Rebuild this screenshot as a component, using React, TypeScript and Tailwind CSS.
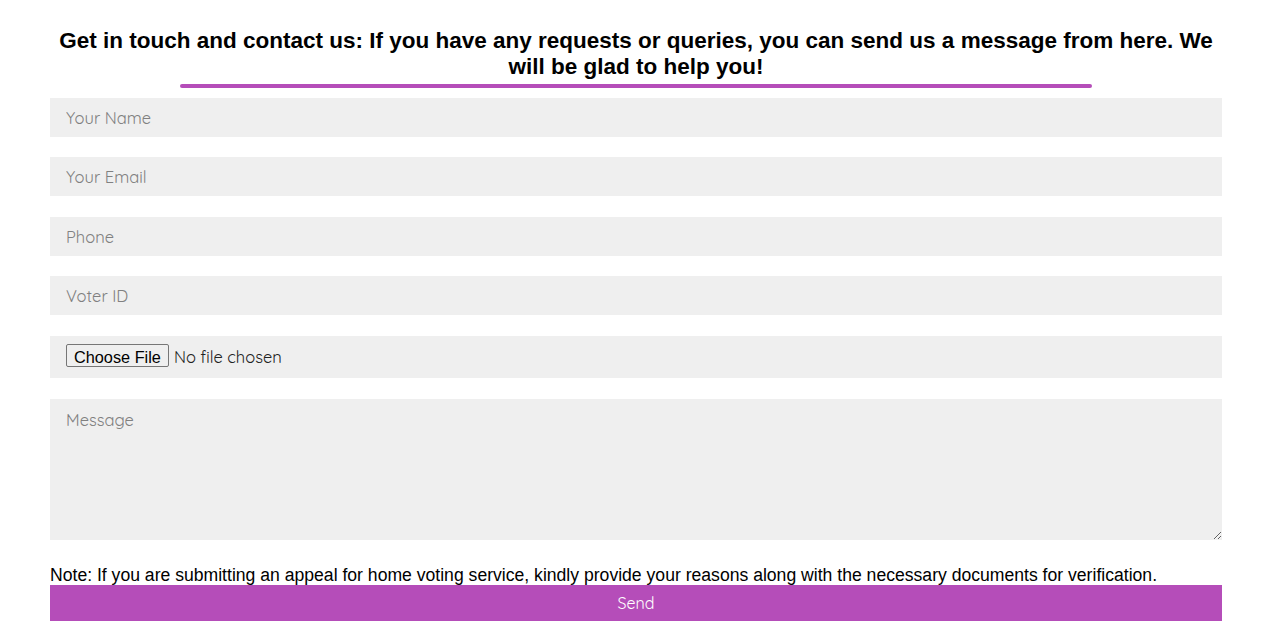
import React from 'react';

const fieldFont = "font-['Quicksand','Lato','Noto_Sans',sans-serif]";

export default function App() {
  const inputClass = `block h-[39px] w-full bg-[#efefef] px-4 text-[16.5px] text-[#333] placeholder:text-[#808080] outline-none ${fieldFont}`;

  return (
    <div className="min-h-[638px] bg-white">
      <div className="ml-[50px] w-[1172px] pt-[28px]">
        <h2 className="text-center font-['Liberation_Sans',Arial,sans-serif] text-[22.5px] font-bold leading-[26px] text-black">
          Get in touch and contact us: If you have any requests or queries, you can send us a message from here. We will be glad to help you!
        </h2>
        <div className="mx-auto mt-[4px] h-[4px] w-[912px] rounded-full bg-[#b54db9]" />

        <form className="mt-[10px] flex flex-col" onSubmit={(e) => e.preventDefault()}>
          <input type="text" placeholder="Your Name" className={inputClass} />
          <input type="email" placeholder="Your Email" className={`${inputClass} mt-[20px]`} />
          <input type="tel" placeholder="Phone" className={`${inputClass} mt-[21px]`} />
          <input type="text" placeholder="Voter ID" className={`${inputClass} mt-[20px]`} />
          <div className={`mt-[21px] flex h-[42px] items-center bg-[#efefef] px-4 ${fieldFont}`}>
            <input
              type="file"
              className={`text-[16.5px] text-[#222] ${fieldFont} file:mr-[5px] file:h-[23px] file:rounded-[2px] file:border file:border-[#767676] file:bg-[#efefef] file:px-[7px] file:font-['Liberation_Sans',Arial,sans-serif] file:text-[16.3px] file:text-black`}
            />
          </div>
          <textarea
            placeholder="Message"
            className={`mt-[21px] block h-[141px] w-full bg-[#efefef] px-4 py-[9px] text-[16.5px] text-[#333] placeholder:text-[#808080] outline-none ${fieldFont}`}
          />
          <p className="mt-[25px] font-['Liberation_Sans',Arial,sans-serif] text-[17.6px] leading-[20px] text-black">
            Note: If you are submitting an appeal for home voting service, kindly provide your reasons along with the necessary documents for verification.
          </p>
          <button
            type="submit"
            className={`h-[36px] w-full bg-[#b54db9] text-base text-white ${fieldFont}`}
          >
            Send
          </button>
        </form>
      </div>
    </div>
  );
}
